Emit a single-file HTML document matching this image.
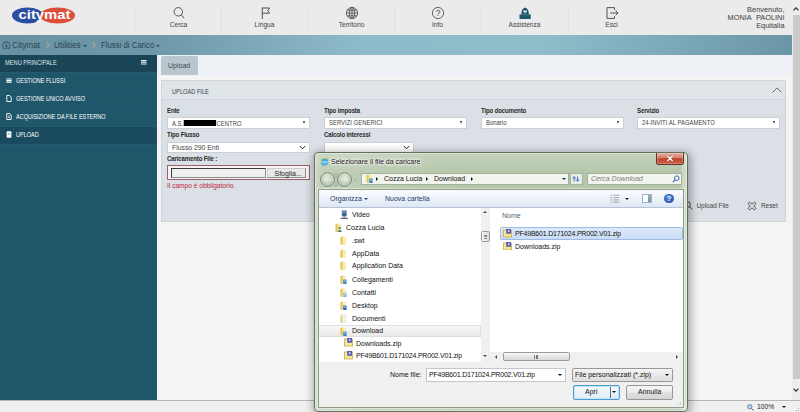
<!DOCTYPE html>
<html lang="it">
<head>
<meta charset="utf-8">
<title>Citymat - Upload</title>
<style>
*{box-sizing:border-box;margin:0;padding:0}
html,body{width:800px;height:412px;overflow:hidden;background:#f4f4f4}
body{position:relative;font-family:"Liberation Sans",sans-serif;font-size:7px;color:#333;line-height:1}
.abs{position:absolute}
.t{position:absolute;white-space:nowrap;line-height:1}
/* ---------- top header ---------- */
#hdr{left:0;top:0;width:792px;height:35px;background:#ebebeb}
.nav{position:absolute;top:0;height:35px;width:87px;text-align:center;font-size:6.6px;color:#444}
.nav svg{position:absolute;left:50%;top:6px;margin-left:-7px;width:14px;height:14px}
.nav span{position:absolute;left:0;right:0;top:21.9px;white-space:nowrap}
.vsep{position:absolute;top:6px;height:26px;width:1px;background:#e1e1e1}
#user{right:7.5px;top:6.1px;text-align:right;font-size:7.4px;line-height:8px;color:#3c3c3c}
/* ---------- breadcrumb ---------- */
#bc{left:0;top:35px;width:792px;height:20px;background:linear-gradient(90deg,#6892a4 0%,#6f99aa 20%,#8ebbc9 46%,#90bdca 68%,#7ba8b7 86%,#6a96a7 100%)}
#bc .t{top:6px;font-size:8.3px;color:#2a444f}
/* ---------- sidebar ---------- */
#side{left:0;top:55px;width:157px;height:345px;background:#1f566a}
#side .mh{position:absolute;left:0;top:0;width:157px;height:17px;background:#1a4557}
#side .it{position:absolute;left:0;width:157px;height:18px;border-top:1px solid #245b70;color:#fff;font-size:6.4px}
#side .it span{position:absolute;left:16px;top:5.4px;white-space:nowrap;transform:scaleX(.86);transform-origin:0 50%}
#side .it svg{position:absolute;left:6px;top:4.2px;width:6px;height:7px}
/* ---------- main ---------- */
#main{left:157px;top:55px;width:635px;height:345px;background:#f4f4f4}
#tabrow{left:157px;top:55px;width:635px;height:21px;background:#eef1f6}
#tab{left:161px;top:56px;width:37px;height:19px;border-radius:2px 2px 0 0;background:#b9c6ce;font-size:7px;color:#3a4a52}
#panel{left:161.4px;top:80px;width:624.6px;height:142px;background:#dae0e5;border:1px solid #cfd5da}
#phead{left:162.4px;top:81px;width:622.6px;height:19px;background:#dee4e8;border-bottom:1px solid #cfd6db}
.lbl{position:absolute;font-size:6.6px;font-weight:bold;color:#2a2a2a;white-space:nowrap;letter-spacing:-0.15px;transform:scaleX(.92);transform-origin:0 50%}
.sel{position:absolute;height:11.5px;background:#fff;border:1px solid #c9cfd4;font-size:6.6px;color:#444;white-space:nowrap}
.sel span{position:absolute;left:4px;top:1.7px;transform:scaleX(.9);transform-origin:0 50%}
.sel i{position:absolute;right:3.6px;top:3.4px;width:0;height:0;border-left:1.9px solid transparent;border-right:1.9px solid transparent;border-top:3.8px solid #333}
.sel svg{position:absolute;right:3px;top:2.5px;width:7px;height:5px}

/* ---------- file dialog ---------- */
#dlg{z-index:5;left:314px;top:152px;width:374px;height:260px;border:1px solid #626d5b;border-radius:4px;background:linear-gradient(270deg,rgba(255,255,255,.4) 0,rgba(255,255,255,.3) 5px,rgba(255,255,255,0) 6px),linear-gradient(90deg,rgba(255,255,255,.3) 0,rgba(255,255,255,.22) 4px,rgba(255,255,255,.16) 5px,rgba(255,255,255,0) 40%),linear-gradient(180deg,#c3d1ba 0,#b4c6aa 20px,#b6c7ac 38px,#c0cfb8 100%);box-shadow:0 0 0 1px rgba(255,255,255,.4) inset,1px 2px 8px 2px rgba(0,0,0,.32);font-family:"Liberation Sans",sans-serif;font-size:7px;color:#000}
#dlg .t{font-size:7.6px;color:#111;transform:scaleX(.921);transform-origin:0 50%}
#dlg .tree{font-size:7.6px;color:#111;position:absolute;white-space:nowrap;line-height:1;transform:scaleX(.921);transform-origin:0 50%}
.fold{position:absolute;width:7px;height:7px}
/* ---------- scrollbar / status ---------- */
#sb{left:792px;top:0;width:8px;height:400px;background:#ededed}
#sbt{left:792.6px;top:14.6px;width:7.4px;height:364px;background:#cbcbcb}
#status{left:0;top:400px;width:800px;height:12px;background:#f0f0f0;border-top:1px solid #b6b6b6}
</style>
</head>
<body>
<!-- HEADER -->
<div id="hdr" class="abs">
  <svg class="abs" style="left:11px;top:7px" width="66" height="17" viewBox="0 0 66 17">
    <ellipse cx="16.5" cy="8.5" rx="15.5" ry="8" fill="#2a4fa2"/>
    <ellipse cx="46.5" cy="8.5" rx="17.5" ry="8" fill="#dc4e3a"/>
    <text x="7.5" y="12" font-family="Liberation Sans, sans-serif" font-weight="bold" font-size="12.6" fill="#fff" textLength="52" lengthAdjust="spacingAndGlyphs">citymat</text>
  </svg>
  <div class="vsep" style="left:134px"></div>
  <div class="vsep" style="left:221px"></div>
  <div class="vsep" style="left:308px"></div>
  <div class="vsep" style="left:394px"></div>
  <div class="vsep" style="left:481px"></div>
  <div class="vsep" style="left:568px"></div>
  <div class="nav" style="left:135px"><svg viewBox="0 0 14 14" fill="none" stroke="#444" stroke-width=".9"><circle cx="6.3" cy="5.8" r="4.2"/><path d="M9.3 8.9 L12 12.2"/></svg><span>Cerca</span></div>
  <div class="nav" style="left:221px"><svg viewBox="0 0 14 14" fill="none" stroke="#444" stroke-width=".9"><path d="M4.3 1.5 V13 M4.3 2 H11.5 L9.8 4.6 L11.5 7.2 H4.3"/></svg><span>Lingua</span></div>
  <div class="nav" style="left:308px"><svg viewBox="0 0 14 14" fill="none" stroke="#444" stroke-width=".8"><circle cx="7" cy="7" r="5.6"/><ellipse cx="7" cy="7" rx="2.6" ry="5.6"/><path d="M7 1.4 V12.6 M1.4 7 H12.6 M2.2 4.2 H11.8 M2.2 9.8 H11.8"/></svg><span>Territorio</span></div>
  <div class="nav" style="left:394px"><svg viewBox="0 0 14 14" fill="none" stroke="#444" stroke-width=".8"><circle cx="7" cy="7" r="5.6"/><text x="7" y="10" text-anchor="middle" font-family="Liberation Sans, sans-serif" font-size="8.5" fill="#444" stroke="none">?</text></svg><span>Info</span></div>
  <div class="nav" style="left:481px"><svg viewBox="0 0 14 14"><path d="M1.5 8.4 H12.7 V13 H1.5 Z" fill="#1f566a"/><path d="M3.4 8.6 C3.2 -.4 11 -.4 10.8 8.6 Z" fill="#1f566a"/><path d="M5 5.2 C5.6 3.8 6.6 4 7.1 5.2 C7.6 4 8.6 3.8 9.2 5.2 L7.1 7.2 Z" fill="#dfe7ea"/></svg><span>Assistenza</span></div>
  <div class="nav" style="left:568px"><svg viewBox="0 0 14 14" fill="none" stroke="#444" stroke-width=".9"><path d="M9.5 3.8 V1.6 H2 V12.4 H9.5 V10.2"/><path d="M5.2 7 H13 M10.6 4.6 L13 7 L10.6 9.4"/></svg><span>Esci</span></div>
  <div id="user" class="abs">Benvenuto,<br>MONIA&nbsp; PAOLINI<br>Equitalia</div>
</div>
<div id="bc" class="abs">
  <svg class="abs" style="left:2px;top:5.6px" width="8.8" height="8.8" viewBox="0 0 8 8" fill="none" stroke="#2a444f" stroke-width=".7"><circle cx="4" cy="4" r="3.4"/><path d="M4 2 V5.6 M2.6 4.4 L4 5.8 L5.4 4.4"/></svg>
  <span class="t" style="left:12px">Citymat</span>
  <svg class="abs" style="left:45.5px;top:6px" width="4" height="8" viewBox="0 0 4 8"><path d="M.8 1.3 L3 4 L.8 6.7" fill="none" stroke="#d6a37f" stroke-width="1.4" opacity=".65"/></svg>
  <span class="t" style="left:54px">Utilities</span>
  <i class="abs" style="left:82.5px;top:9.5px;border-left:2px solid transparent;border-right:2px solid transparent;border-top:2.4px solid #2d4a55"></i>
  <svg class="abs" style="left:92px;top:6px" width="4" height="8" viewBox="0 0 4 8"><path d="M.8 1.3 L3 4 L.8 6.7" fill="none" stroke="#d6a37f" stroke-width="1.4" opacity=".65"/></svg>
  <span class="t" style="left:100.5px;transform:scaleX(.94);transform-origin:0 50%">Flussi di Carico</span>
  <i class="abs" style="left:155.5px;top:9.5px;border-left:2px solid transparent;border-right:2px solid transparent;border-top:2.4px solid #2d4a55"></i>
</div>
<div id="side" class="abs"><div class="mh"><span class="t" style="left:5px;top:5px;color:#dfe7ea;font-size:6.4px;transform:scaleX(.89);transform-origin:0 50%">MENU PRINCIPALE</span>
  <svg class="abs" style="left:141px;top:5.4px" width="5.6" height="4.6" viewBox="0 0 5.6 4.6"><path d="M0 .6 H5.6 M0 2.3 H5.6 M0 4 H5.6" stroke="#e8eef0" stroke-width="1.1"/></svg></div>
  <div class="it" style="top:17px"><svg viewBox="0 0 6 7"><path d="M.3 2 H5.7 M.3 3.6 H5.7 M.3 5.2 H5.7" stroke="#fff" stroke-width="1.1"/></svg><span>GESTIONE FLUSSI</span></div>
  <div class="it" style="top:34.9px"><svg viewBox="0 0 6 7"><path d="M.8 .5 H3.8 L5.2 2 V6.5 H.8 Z" fill="none" stroke="#fff" stroke-width=".9"/></svg><span>GESTIONE UNICO AVVISO</span></div>
  <div class="it" style="top:52.8px"><svg viewBox="0 0 6 7"><path d="M.8 .5 H3.8 L5.2 2 V6.5 H.8 Z" fill="none" stroke="#fff" stroke-width=".9"/><path d="M2 3 H4 M2 4.6 H4" stroke="#fff" stroke-width=".7"/></svg><span>ACQUISIZIONE DA FILE ESTERNO</span></div>
  <div class="it" style="top:70.7px;background:#1b4b5e"><svg viewBox="0 0 6 7"><rect x=".6" y=".3" width="4.8" height="6.4" rx="1" fill="#fff"/><path d="M1.5 3 H4.5" stroke="#1b4b5e" stroke-width=".6"/></svg><span>UPLOAD</span></div>
  <div class="it" style="top:88.7px;height:1px"></div>
</div>
<div id="main" class="abs"></div>
<div id="tabrow" class="abs"></div>
<div id="tab" class="abs"><span class="t" style="left:7px;top:6px">Upload</span></div>
<div id="panel" class="abs"></div>
<div id="phead" class="abs"><span class="t" style="left:9.5px;top:7.6px;font-size:6.6px;color:#3a444a;transform:scaleX(.86);transform-origin:0 50%">UPLOAD FILE</span>
  <svg class="abs" style="left:609.5px;top:6.2px" width="10" height="6" viewBox="0 0 10 6"><path d="M.6 5.4 L5 .9 L9.4 5.4" fill="none" stroke="#55626a" stroke-width=".9"/></svg></div>
<div id="form" class="abs" style="left:0;top:0">
  <span class="lbl" style="left:167px;top:107.5px">Ente</span>
  <div class="sel" style="left:167px;top:117px;width:143px"><span>A.S.<b style="display:inline-block;width:36px;height:6.4px;background:#000;vertical-align:-0.4px;margin:0 .5px"></b>CENTRO</span><i></i></div>
  <span class="lbl" style="left:324px;top:107.5px">Tipo imposta</span>
  <div class="sel" style="left:324px;top:117px;width:143px"><span>SERVIZI GENERICI</span><i></i></div>
  <span class="lbl" style="left:481px;top:107.5px">Tipo documento</span>
  <div class="sel" style="left:481px;top:117px;width:143px"><span>Bonario</span><i></i></div>
  <span class="lbl" style="left:637px;top:107.5px">Servizio</span>
  <div class="sel" style="left:637px;top:117px;width:143px"><span>24-INVITI AL PAGAMENTO</span><i></i></div>
  <span class="lbl" style="left:167px;top:132px">Tipo Flusso</span>
  <div class="sel" style="left:167px;top:141.5px;width:143px"><span style="font-size:7.2px;top:1.2px;left:3.5px;transform:scaleX(.95)">Flusso 290 Enti</span><svg viewBox="0 0 7 5"><path d="M.8 1 L3.5 3.8 L6.2 1" fill="none" stroke="#222" stroke-width="1"/></svg></div>
  <span class="lbl" style="left:324px;top:132px">Calcolo interessi</span>
  <div class="sel" style="left:324px;top:141.5px;width:90px"><svg viewBox="0 0 7 5"><path d="M.8 1 L3.5 3.8 L6.2 1" fill="none" stroke="#222" stroke-width="1"/></svg></div>
  <span class="lbl" style="left:167px;top:156px">Caricamento File :</span>
  <div class="abs" style="left:167px;top:165px;width:143px;height:15px;background:#f6f3f3;border:1px solid #9c5f6a"></div>
  <div class="abs" style="left:171px;top:168px;width:95px;height:9.5px;background:#efefef;border:1px solid #8f8f8f;border-top-color:#3c3c3c;border-left-color:#3c3c3c"></div>
  <div class="abs" style="left:267px;top:168px;width:39px;height:9.5px;background:#e9e9e9;border:1px solid #8a8a8a;border-top-color:#cfcfcf;border-left-color:#cfcfcf;font-size:7px;color:#222"><span class="t" style="left:6.5px;top:.6px">Sfoglia...</span></div>
  <span class="t" style="left:167px;top:182.5px;font-size:6.6px;color:#c22a3d">Il campo è obbligatorio.</span>
  <svg class="abs" style="left:684px;top:201px" width="9" height="9" viewBox="0 0 9 9" fill="none" stroke="#333" stroke-width=".9"><circle cx="3.6" cy="3.6" r="2.8"/><path d="M5.6 5.6 L8.4 8.4"/></svg>
  <span class="t" style="left:696.5px;top:203px;font-size:6.4px;color:#444">Upload File</span>
  <svg class="abs" style="left:747px;top:201px" width="10" height="10" viewBox="0 0 10 10" fill="none" stroke="#333" stroke-width=".8"><path d="M2.6 1 L5 3.2 L7.4 1 L9 2.6 L6.8 5 L9 7.4 L7.4 9 L5 6.8 L2.6 9 L1 7.4 L3.2 5 L1 2.6 Z" stroke-linejoin="round"/></svg>
  <span class="t" style="left:761px;top:203px;font-size:6.4px;color:#444">Reset</span>
</div>
<div id="dlg" class="abs">
  <svg class="abs" style="left:4.5px;top:4px" width="9" height="9" viewBox="0 0 9 9"><circle cx="4.5" cy="5" r="3.8" fill="#37abdd"/><path d="M1.4 5 H7.6" stroke="#c4e8f7" stroke-width="1.2"/><path d="M2.4 6.6 C3.4 8 6 7.8 6.9 6.4" stroke="#8fd3ee" stroke-width=".8" fill="none"/><path d="M.5 7.6 C-.6 3 4.5 -.8 8.7 1.5" fill="none" stroke="#e8d45c" stroke-width=".9"/></svg>
  <span class="t" style="left:15.5px;top:4.64px;text-shadow:0 0 2px #fff,0 0 3px #fff,0 0 5px #fff,0 0 6px #fff">Selezionare il file da caricare</span>
  <div class="abs" style="left:340.5px;top:-0.5px;width:28px;height:12px;border:1px solid #63322b;border-top:none;border-radius:0 0 3px 3px;background:linear-gradient(180deg,#e6b0a4 0,#d47a68 45%,#c0412a 52%,#cf6048 100%);box-shadow:0 0 0 .6px rgba(255,255,255,.45) inset"><svg class="abs" style="left:9.5px;top:2.2px" width="8" height="7" viewBox="0 0 8 7"><path d="M1.4 1 L6.6 6 M6.6 1 L1.4 6" stroke="#6a2a22" stroke-width="2.4" opacity=".5"/><path d="M1.4 1 L6.6 6 M6.6 1 L1.4 6" stroke="#fff" stroke-width="1.5"/></svg></div>
  <div class="abs" style="left:4.5px;top:19.5px;width:33px;height:13px;border-radius:7px;background:rgba(110,130,100,.22)"></div>
  <div class="abs" style="left:4.8px;top:18.5px;width:15px;height:15px;border-radius:50%;border:1px solid #7a8a73;background:radial-gradient(circle at 50% 30%,#dde5d8 0,#c3cfbc 55%,#b4c3ad 100%);box-shadow:0 0 0 .6px rgba(255,255,255,.5)"></div>
  <div class="abs" style="left:22.2px;top:18.5px;width:15px;height:15px;border-radius:50%;border:1px solid #7a8a73;background:radial-gradient(circle at 50% 30%,#dde5d8 0,#c3cfbc 55%,#b4c3ad 100%);box-shadow:0 0 0 .6px rgba(255,255,255,.5)"></div>
  <svg class="abs" style="left:8px;top:22.5px" width="9" height="7" viewBox="0 0 9 7"><path d="M8 3.5 H2 M4.4 .8 L1.6 3.5 L4.4 6.2" fill="none" stroke="#e3e9df" stroke-width="1.5"/></svg>
  <svg class="abs" style="left:25.4px;top:22.5px" width="9" height="7" viewBox="0 0 9 7"><path d="M1 3.5 H7 M4.6 .8 L7.4 3.5 L4.6 6.2" fill="none" stroke="#e3e9df" stroke-width="1.5"/></svg>
  <i class="abs" style="left:38.9px;top:26px;border-left:1.6px solid transparent;border-right:1.6px solid transparent;border-top:2px solid #9aa995"></i>
  <div class="abs" style="left:45.5px;top:20px;width:208px;height:12px;background:#f1f5ed;border:1px solid #a3b19d"></div>
  <svg class="abs" style="left:50.5px;top:21.2px" width="7" height="9.4" viewBox="0 0 7 9.4"><path d="M.5 1.2 L2.6 .4 L5.9 1.8 V8.6 L2.6 9 L.5 8.2 Z" fill="#f4e08c"/><path d="M2.6 .4 L5.9 1.8 V8.6 L2.6 9 Z" fill="#f8eeb4"/><path d="M.5 1.2 L2.6 .4 V9 L.5 8.2 Z" fill="#e9c659"/><path d="M3.2 4.6 H6.6 V9 H3.2 Z" fill="#2f86d6"/><path d="M3.9 5.4 H5.9 V6.6 H3.9 Z" fill="#d6ecff" opacity=".7"/></svg>
  <i class="abs" style="left:61.1px;top:23.7px;border-top:2.3px solid transparent;border-bottom:2.3px solid transparent;border-left:2.8px solid #111"></i>
  <span class="t" style="left:69px;top:21.94px;">Cozza Lucia</span>
  <i class="abs" style="left:111.1px;top:23.7px;border-top:2.3px solid transparent;border-bottom:2.3px solid transparent;border-left:2.8px solid #111"></i>
  <span class="t" style="left:119px;top:21.94px;">Download</span>
  <i class="abs" style="left:156.1px;top:23.7px;border-top:2.3px solid transparent;border-bottom:2.3px solid transparent;border-left:2.8px solid #111"></i>
  <i class="abs" style="left:247.1px;top:25.2px;border-left:2.4px solid transparent;border-right:2.4px solid transparent;border-top:2.6px solid #1d2b57"></i>
  <div class="abs" style="left:255px;top:20px;width:12.5px;height:12px;background:#e6ede2;border:1px solid #a5b39f"></div>
  <svg class="abs" style="left:257.3px;top:22px" width="8" height="8" viewBox="0 0 8 8"><path d="M2.2 6.5 V2 M.8 3.4 L2.2 1.6 L3.6 3.4" fill="none" stroke="#3b74c4" stroke-width="1"/><path d="M5.6 1.5 V6 M4.2 4.6 L5.6 6.4 L7 4.6" fill="none" stroke="#3b74c4" stroke-width="1"/></svg>
  <div class="abs" style="left:271.5px;top:20px;width:95.5px;height:12px;background:#f1f5ed;border:1px solid #a3b19d"></div>
  <span class="t" style="left:276px;top:21.94px;font-style:italic;color:#7d7d7d">Cerca Download</span>
  <svg class="abs" style="left:357px;top:22px" width="8" height="8" viewBox="0 0 8 8"><circle cx="4.8" cy="3.2" r="2.3" fill="none" stroke="#3a66b0" stroke-width="1"/><path d="M3.2 4.8 L.9 7.2" stroke="#3a66b0" stroke-width="1.2"/></svg>
  <div class="abs" style="left:3px;top:36px;width:366px;height:218.5px;background:#f0f0f0;border:1px solid #8d9d86;box-shadow:0 0 0 1px rgba(255,255,255,.4)"></div>
  <div class="abs" style="left:4px;top:37px;width:364px;height:17.5px;background:linear-gradient(180deg,#fbfcfe 0,#eef3fa 45%,#dde7f4 100%);border-bottom:1px solid #b6c4d6"></div>
  <span class="t" style="left:14.5px;top:41.54px;color:#1e3a66">Organizza</span>
  <i class="abs" style="left:49.4px;top:44.8px;border-left:2.1px solid transparent;border-right:2.1px solid transparent;border-top:2.4px solid #1e3a66"></i>
  <span class="t" style="left:70px;top:41.54px;color:#1e3a66">Nuova cartella</span>
  <svg class="abs" style="left:295px;top:40.8px" width="9.6" height="9.6" viewBox="0 0 9.6 9.6"><path d="M.4 1.3 H2.2 M.4 3.6 H2.2 M.4 5.9 H2.2 M.4 8.2 H2.2" stroke="#7d9cc8" stroke-width=".8"/><path d="M3.2 1.3 H9.2 M3.2 3.6 H9.2 M3.2 5.9 H9.2 M3.2 8.2 H9.2" stroke="#8a8a8a" stroke-width=".7"/></svg>
  <i class="abs" style="left:310.2px;top:44.6px;border-left:2.1px solid transparent;border-right:2.1px solid transparent;border-top:2.4px solid #222"></i>
  <div class="abs" style="left:327px;top:41px;width:10px;height:9px;background:#fff;border:1px solid #a4b3c3"><div class="abs" style="right:0;top:0;width:3px;height:7px;background:linear-gradient(180deg,#8fb0c4,#6f98ae)"></div></div>
  <div class="abs" style="left:349.2px;top:40.7px;width:9.6px;height:9.6px;border-radius:50%;background:radial-gradient(circle at 40% 30%,#5b8ee0,#1b3f9a);color:#fff;font-weight:bold;font-size:7.6px;text-align:center;line-height:9.6px">?</div>
  <div class="abs" style="left:4px;top:54.5px;width:364px;height:154px;background:#fff"></div>
  <div class="abs" style="left:4px;top:171.5px;width:161.5px;height:12px;background:linear-gradient(180deg,#f8f8f8,#e9e9e9);border:1px solid #dedede;border-left:none"></div>
  <svg class="abs" style="left:25px;top:56.7px" width="8.6" height="9.6" viewBox="0 0 8.6 9.6"><rect x="2" y=".4" width="4.6" height="5.8" rx=".4" fill="#35558c" stroke="#9fb3cf" stroke-width=".6"/><rect x="2.8" y="1.2" width="3" height="2.2" fill="#6d93c9"/><path d="M3.4 6.4 H5.2 V7.8 H3.4 Z" fill="#7a8796"/><path d="M.6 8.4 H8 " stroke="#5a6673" stroke-width="1.3"/></svg>
  <span class="tree" style="left:36.5px;top:57.74px;">Video</span>
  <svg class="abs" style="left:19.5px;top:70.04px" width="7" height="9.4" viewBox="0 0 7 9.4"><path d="M.5 1.2 L2.6 .4 L5.9 1.8 V8.6 L2.6 9 L.5 8.2 Z" fill="#f4e08c"/><path d="M2.6 .4 L5.9 1.8 V8.6 L2.6 9 Z" fill="#f8eeb4"/><path d="M.5 1.2 L2.6 .4 V9 L.5 8.2 Z" fill="#e9c659"/><circle cx="4.6" cy="5" r="1.3" fill="#6a8f5a"/><path d="M2.8 9 C2.8 6.4 6.6 6.4 6.6 9 Z" fill="#4f7d8f"/></svg>
  <span class="tree" style="left:31.3px;top:70.68px;">Cozza Lucia</span>
  <svg class="abs" style="left:25.3px;top:82.98px" width="7" height="9.4" viewBox="0 0 7 9.4"><path d="M.5 1.2 L2.6 .4 L5.9 1.8 V8.6 L2.6 9 L.5 8.2 Z" fill="#f4e08c"/><path d="M2.6 .4 L5.9 1.8 V8.6 L2.6 9 Z" fill="#f8eeb4"/><path d="M.5 1.2 L2.6 .4 V9 L.5 8.2 Z" fill="#e9c659"/></svg>
  <span class="tree" style="left:36.5px;top:83.62px;">.swt</span>
  <svg class="abs" style="left:25.3px;top:95.92px" width="7" height="9.4" viewBox="0 0 7 9.4"><path d="M.5 1.2 L2.6 .4 L5.9 1.8 V8.6 L2.6 9 L.5 8.2 Z" fill="#f4e08c"/><path d="M2.6 .4 L5.9 1.8 V8.6 L2.6 9 Z" fill="#f8eeb4"/><path d="M.5 1.2 L2.6 .4 V9 L.5 8.2 Z" fill="#e9c659"/></svg>
  <span class="tree" style="left:36.5px;top:96.56px;">AppData</span>
  <svg class="abs" style="left:25.3px;top:108.46px" width="7" height="9.4" viewBox="0 0 7 9.4"><path d="M.5 1.2 L2.6 .4 L5.9 1.8 V8.6 L2.6 9 L.5 8.2 Z" fill="#f4e08c"/><path d="M2.6 .4 L5.9 1.8 V8.6 L2.6 9 Z" fill="#f8eeb4"/><path d="M.5 1.2 L2.6 .4 V9 L.5 8.2 Z" fill="#e9c659"/></svg>
  <span class="tree" style="left:36.5px;top:109.1px;">Application Data</span>
  <svg class="abs" style="left:25.3px;top:122.4px" width="7" height="9.4" viewBox="0 0 7 9.4"><path d="M.5 1.2 L2.6 .4 L5.9 1.8 V8.6 L2.6 9 L.5 8.2 Z" fill="#f4e08c"/><path d="M2.6 .4 L5.9 1.8 V8.6 L2.6 9 Z" fill="#f8eeb4"/><path d="M.5 1.2 L2.6 .4 V9 L.5 8.2 Z" fill="#e9c659"/><path d="M3.2 4.6 H6.6 V9 H3.2 Z" fill="#2f86d6"/><path d="M3.9 5.4 H5.9 V6.6 H3.9 Z" fill="#d6ecff" opacity=".7"/></svg>
  <span class="tree" style="left:36.5px;top:123.04px;">Collegamenti</span>
  <svg class="abs" style="left:25.3px;top:135.44px" width="7" height="9.4" viewBox="0 0 7 9.4"><path d="M.5 1.2 L2.6 .4 L5.9 1.8 V8.6 L2.6 9 L.5 8.2 Z" fill="#f4e08c"/><path d="M2.6 .4 L5.9 1.8 V8.6 L2.6 9 Z" fill="#f8eeb4"/><path d="M.5 1.2 L2.6 .4 V9 L.5 8.2 Z" fill="#e9c659"/><path d="M3.2 4.6 H6.6 V9 H3.2 Z" fill="#8fb8dc"/><path d="M3.9 5.4 H5.9 V6.6 H3.9 Z" fill="#d6ecff" opacity=".7"/></svg>
  <span class="tree" style="left:36.5px;top:136.08px;">Contatti</span>
  <svg class="abs" style="left:25.3px;top:148.48px" width="7" height="9.4" viewBox="0 0 7 9.4"><path d="M.5 1.2 L2.6 .4 L5.9 1.8 V8.6 L2.6 9 L.5 8.2 Z" fill="#f4e08c"/><path d="M2.6 .4 L5.9 1.8 V8.6 L2.6 9 Z" fill="#f8eeb4"/><path d="M.5 1.2 L2.6 .4 V9 L.5 8.2 Z" fill="#e9c659"/><path d="M3.2 4.6 H6.6 V9 H3.2 Z" fill="#2d6cc4"/><path d="M3.9 5.4 H5.9 V6.6 H3.9 Z" fill="#d6ecff" opacity=".7"/></svg>
  <span class="tree" style="left:36.5px;top:149.12px;">Desktop</span>
  <svg class="abs" style="left:25.3px;top:160.92px" width="7" height="9.4" viewBox="0 0 7 9.4"><path d="M.8 .8 L4.6 .4 L6 1.6 V8.8 L.8 9 Z" fill="#f2f2ee" stroke="#c4c4bc" stroke-width=".4"/><path d="M.5 2 L2.4 1.6 V9 L.5 8.4 Z" fill="#ecd27a"/></svg>
  <span class="tree" style="left:36.5px;top:161.56px;">Documenti</span>
  <svg class="abs" style="left:25.3px;top:173.56px" width="7" height="9.4" viewBox="0 0 7 9.4"><path d="M.5 1.2 L2.6 .4 L5.9 1.8 V8.6 L2.6 9 L.5 8.2 Z" fill="#f4e08c"/><path d="M2.6 .4 L5.9 1.8 V8.6 L2.6 9 Z" fill="#f8eeb4"/><path d="M.5 1.2 L2.6 .4 V9 L.5 8.2 Z" fill="#e9c659"/><path d="M3.2 4.6 H6.6 V9 H3.2 Z" fill="#2f86d6"/><path d="M3.9 5.4 H5.9 V6.6 H3.9 Z" fill="#d6ecff" opacity=".7"/></svg>
  <span class="tree" style="left:36.5px;top:174.2px;">Download</span>
  <svg class="abs" style="left:28.9px;top:185.4px" width="9" height="8.5" viewBox="0 0 9 8.5"><rect x=".5" y="1" width="8" height="7" fill="#f6e88f" stroke="#bfa23e" stroke-width=".7"/><rect x="3.6" y=".3" width="4.2" height="4.2" fill="#5055cc" stroke="#34379a" stroke-width=".4"/><rect x="4.9" y="1.2" width="1.6" height="2" fill="#d4d6fa"/></svg>
  <span class="tree" style="left:41.2px;top:186.74px;">Downloads.zip</span>
  <svg class="abs" style="left:28.9px;top:198.3px" width="9" height="8.5" viewBox="0 0 9 8.5"><rect x=".5" y="1" width="8" height="7" fill="#f6e88f" stroke="#bfa23e" stroke-width=".7"/><rect x="3.6" y=".3" width="4.2" height="4.2" fill="#5055cc" stroke="#34379a" stroke-width=".4"/><rect x="4.9" y="1.2" width="1.6" height="2" fill="#d4d6fa"/></svg>
  <span class="tree" style="left:41.2px;top:199.34px;letter-spacing:-.22px">PF49B601.D171024.PR002.V01.zip</span>
  <div class="abs" style="left:165.5px;top:54.5px;width:9.5px;height:154px;background:#f0f0f0"></div>
  <i class="abs" style="left:168.2px;top:58.3px;border-left:2px solid transparent;border-right:2px solid transparent;border-bottom:2.4px solid #444"></i>
  <i class="abs" style="left:168.2px;top:202.3px;border-left:2px solid transparent;border-right:2px solid transparent;border-top:2.4px solid #444"></i>
  <div class="abs" style="left:166px;top:78.3px;width:8.5px;height:11.2px;border:1px solid #9a9a9a;border-radius:1.5px;background:linear-gradient(90deg,#f6f6f6,#dadada)"><div class="abs" style="left:1.7px;top:2.6px;width:3.2px;height:4px;border-top:1px solid #8a8a8a;border-bottom:1px solid #8a8a8a"><div class="abs" style="left:0;top:.6px;width:3.2px;height:.8px;background:#8a8a8a"></div></div></div>
  <span class="t" style="left:187px;top:58.74px;color:#4c5f7c">Nome</span>
  <div class="abs" style="left:184.5px;top:74.2px;width:183.5px;height:13.1px;background:linear-gradient(180deg,#dce9f9,#c9ddf5);border:1px solid #9dbce3;border-radius:1.5px"></div>
  <svg class="abs" style="left:188px;top:76px" width="9" height="8.5" viewBox="0 0 9 8.5"><rect x=".5" y="1" width="8" height="7" fill="#f6e88f" stroke="#bfa23e" stroke-width=".7"/><rect x="3.6" y=".3" width="4.2" height="4.2" fill="#5055cc" stroke="#34379a" stroke-width=".4"/><rect x="4.9" y="1.2" width="1.6" height="2" fill="#d4d6fa"/></svg>
  <span class="tree" style="left:200px;top:76.54px;letter-spacing:-.22px">PF49B601.D171024.PR002.V01.zip</span>
  <svg class="abs" style="left:188px;top:88.8px" width="9" height="8.5" viewBox="0 0 9 8.5"><rect x=".5" y="1" width="8" height="7" fill="#f6e88f" stroke="#bfa23e" stroke-width=".7"/><rect x="3.6" y=".3" width="4.2" height="4.2" fill="#5055cc" stroke="#34379a" stroke-width=".4"/><rect x="4.9" y="1.2" width="1.6" height="2" fill="#d4d6fa"/></svg>
  <span class="tree" style="left:200px;top:90.04px;">Downloads.zip</span>
  <div class="abs" style="left:175px;top:198.5px;width:193px;height:10px;background:#f0f0f0"></div>
  <i class="abs" style="left:180px;top:201.5px;border-top:2px solid transparent;border-bottom:2px solid transparent;border-right:2.4px solid #444"></i>
  <i class="abs" style="left:361.3px;top:201.5px;border-top:2px solid transparent;border-bottom:2px solid transparent;border-left:2.4px solid #444"></i>
  <div class="abs" style="left:187.5px;top:199px;width:67px;height:9px;border:1px solid #9a9a9a;border-radius:1.5px;background:linear-gradient(180deg,#f7f7f7,#d7d7d7)"><div class="abs" style="left:30.5px;top:2px;width:4px;height:3.5px;border-left:1px solid #777;border-right:1px solid #777"><div class="abs" style="left:.5px;top:0;width:1px;height:3.5px;background:#777"></div></div></div>
  <span class="t" style="left:74.5px;top:218.14px;">Nome file:</span>
  <div class="abs" style="left:110.5px;top:215px;width:140.5px;height:13.5px;background:#fff;border:1px solid #c2c7ce"></div>
  <span class="t" style="left:113.5px;top:218.14px;letter-spacing:-.22px">PF49B601.D171024.PR002.V01.zip</span>
  <i class="abs" style="left:243px;top:220.6px;border-left:2.5px solid transparent;border-right:2.5px solid transparent;border-top:2.8px solid #111"></i>
  <div class="abs" style="left:257px;top:215px;width:101px;height:13.5px;background:linear-gradient(180deg,#f5f5f5,#dddddd);border:1px solid #979797;border-radius:1.5px"></div>
  <span class="t" style="left:260px;top:218.14px;">File personalizzati (*.zip)</span>
  <i class="abs" style="left:350px;top:220.6px;border-left:2.5px solid transparent;border-right:2.5px solid transparent;border-top:2.8px solid #111"></i>
  <div class="abs" style="left:257.5px;top:231.5px;width:47px;height:15px;background:linear-gradient(180deg,#f7fbfe,#deebf5);border:1px solid #4c9dcf;border-radius:2px;box-shadow:0 0 0 1px #c3e6f8 inset"><div class="abs" style="left:36px;top:1px;width:1px;height:11px;background:#5f6f7d"></div></div>
  <i class="abs" style="left:297px;top:237.9px;border-left:2.5px solid transparent;border-right:2.5px solid transparent;border-top:2.8px solid #111"></i>
  <span class="t" style="left:269.5px;top:234.74px;">Apri</span>
  <div class="abs" style="left:311px;top:231.5px;width:46.5px;height:15px;background:linear-gradient(180deg,#f5f5f5 0,#ececec 48%,#dedede 52%,#d6d6d6 100%);border:1px solid #979797;border-radius:2px"></div>
  <span class="t" style="left:322.5px;top:234.74px;">Annulla</span>
  <div class="abs" style="left:365px;top:249px;width:1px;height:1px;background:#b0b0b0"></div>
  <div class="abs" style="left:365px;top:251px;width:1px;height:1px;background:#b0b0b0"></div>
  <div class="abs" style="left:363px;top:251px;width:1px;height:1px;background:#b0b0b0"></div>
</div>
<div id="sb" class="abs"><svg class="abs" style="left:1px;top:7px" width="6" height="4" viewBox="0 0 6 4"><path d="M.5 3.4 L3 .8 L5.5 3.4" fill="none" stroke="#333" stroke-width="1.2"/></svg>
<svg class="abs" style="left:1px;top:388px" width="6" height="4" viewBox="0 0 6 4"><path d="M.5 .6 L3 3.2 L5.5 .6" fill="none" stroke="#333" stroke-width="1.2"/></svg></div>
<div id="sbt" class="abs"></div>
<div id="status" class="abs">
  <svg class="abs" style="left:747px;top:2.5px" width="7" height="7" viewBox="0 0 7 7"><circle cx="2.8" cy="2.8" r="2.2" fill="#bcd3ee" stroke="#3e6aa8" stroke-width=".7"/><path d="M4.4 4.4 L6.6 6.6" stroke="#555" stroke-width="1"/></svg>
  <span class="t" style="left:756.5px;top:2.3px;font-size:7.7px;color:#222;transform:scaleX(.87);transform-origin:0 50%">100%</span>
  <i class="abs" style="left:781.8px;top:5px;border-left:2.5px solid transparent;border-right:2.5px solid transparent;border-top:2.8px solid #222"></i>
  <b class="abs" style="left:797.5px;top:6.5px;width:1px;height:1px;background:#aaa"></b><b class="abs" style="left:797.5px;top:8.5px;width:1px;height:1px;background:#aaa"></b><b class="abs" style="left:795.5px;top:8.5px;width:1px;height:1px;background:#aaa"></b>
</div>
</body>
</html>
